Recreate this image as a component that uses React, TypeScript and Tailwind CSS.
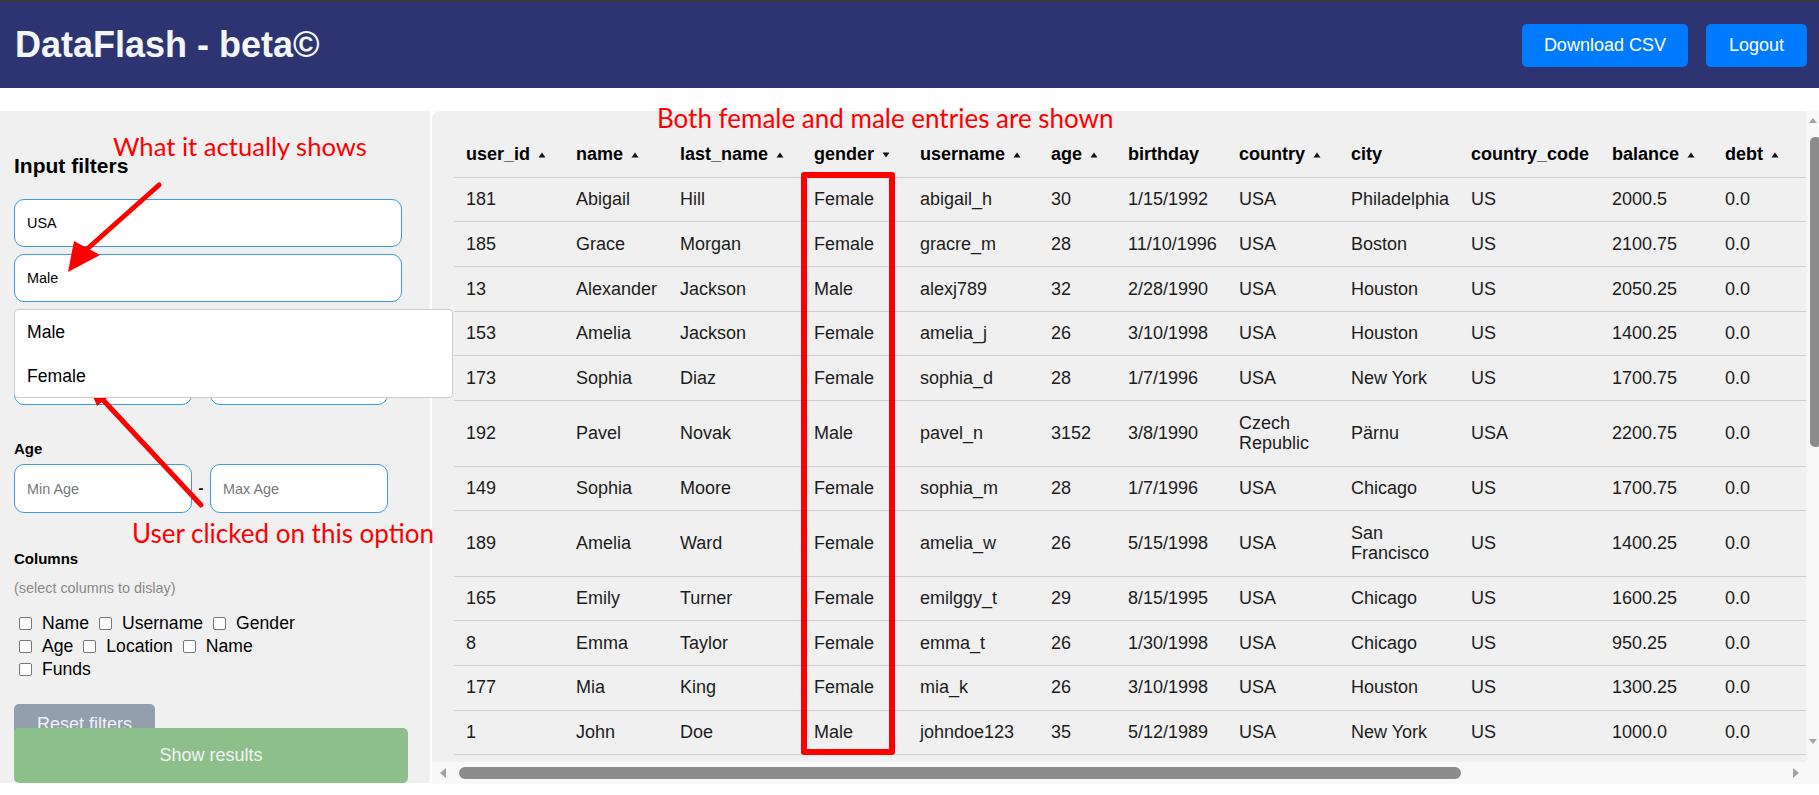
import React from "react";

type Col = { key: string; w: string; sort?: "up" | "down" };

const cols: Col[] = [
  { key: "user_id", w: "w-[110px]", sort: "up" },
  { key: "name", w: "w-[104px]", sort: "up" },
  { key: "last_name", w: "w-[134px]", sort: "up" },
  { key: "gender", w: "w-[106px]", sort: "down" },
  { key: "username", w: "w-[131px]", sort: "up" },
  { key: "age", w: "w-[77px]", sort: "up" },
  { key: "birthday", w: "w-[111px]" },
  { key: "country", w: "w-[112px]", sort: "up" },
  { key: "city", w: "w-[120px]" },
  { key: "country_code", w: "w-[141px]" },
  { key: "balance", w: "w-[113px]", sort: "up" },
  { key: "debt", w: "w-[140px]", sort: "up" },
];

const rows: string[][] = [
  ["181", "Abigail", "Hill", "Female", "abigail_h", "30", "1/15/1992", "USA", "Philadelphia", "US", "2000.5", "0.0"],
  ["185", "Grace", "Morgan", "Female", "gracre_m", "28", "11/10/1996", "USA", "Boston", "US", "2100.75", "0.0"],
  ["13", "Alexander", "Jackson", "Male", "alexj789", "32", "2/28/1990", "USA", "Houston", "US", "2050.25", "0.0"],
  ["153", "Amelia", "Jackson", "Female", "amelia_j", "26", "3/10/1998", "USA", "Houston", "US", "1400.25", "0.0"],
  ["173", "Sophia", "Diaz", "Female", "sophia_d", "28", "1/7/1996", "USA", "New York", "US", "1700.75", "0.0"],
  ["192", "Pavel", "Novak", "Male", "pavel_n", "3152", "3/8/1990", "Czech\nRepublic", "Pärnu", "USA", "2200.75", "0.0"],
  ["149", "Sophia", "Moore", "Female", "sophia_m", "28", "1/7/1996", "USA", "Chicago", "US", "1700.75", "0.0"],
  ["189", "Amelia", "Ward", "Female", "amelia_w", "26", "5/15/1998", "USA", "San\nFrancisco", "US", "1400.25", "0.0"],
  ["165", "Emily", "Turner", "Female", "emilggy_t", "29", "8/15/1995", "USA", "Chicago", "US", "1600.25", "0.0"],
  ["8", "Emma", "Taylor", "Female", "emma_t", "26", "1/30/1998", "USA", "Chicago", "US", "950.25", "0.0"],
  ["177", "Mia", "King", "Female", "mia_k", "26", "3/10/1998", "USA", "Houston", "US", "1300.25", "0.0"],
  ["1", "John", "Doe", "Male", "johndoe123", "35", "5/12/1989", "USA", "New York", "US", "1000.0", "0.0"],
];

function SortIcon({ dir }: { dir: "up" | "down" }) {
  return (
    <svg width="8" height="6" viewBox="0 0 8 6" className="inline-block ml-[8px] align-middle">
      {dir === "up" ? <path d="M4 0.5 L7.5 5.5 L0.5 5.5 Z" fill="#111" /> : <path d="M0.5 0.5 L7.5 0.5 L4 5.5 Z" fill="#111" />}
    </svg>
  );
}

const checks = ["Name", "Username", "Gender", "Age", "Location", "Name", "Funds"];

export default function App() {
  return (
    <div className="relative w-[1819px] h-[795px] overflow-hidden bg-white font-['Liberation_Sans',Arial,sans-serif] text-black">
      {/* Header */}
      <header className="h-[88px] bg-[#2e3471] border-t-2 border-[#3a3a3a] flex items-center justify-between pl-[15px] pr-[12px]">
        <h1 className="text-[36px] font-bold leading-[1.15] text-[#f3f6ff]">DataFlash - beta©</h1>
        <div className="flex gap-[18px]">
          <button className="h-[43px] px-[22px] rounded-[5px] bg-[#007bff] text-white text-[18px]">Download CSV</button>
          <button className="h-[43px] px-[23px] rounded-[5px] bg-[#007bff] text-white text-[18px]">Logout</button>
        </div>
      </header>

      <div className="mt-[23px] flex gap-[2px]">
        {/* Left filter panel */}
        <aside className="relative w-[430px] h-[672px] shrink-0 bg-[#f0f0f0] pl-[14px] pt-[43px]">
          <h2 className="text-[21px] font-bold leading-[24px]">Input filters</h2>
          <input
            readOnly
            value="USA"
            className="mt-[21px] block w-[388px] h-[48px] rounded-[10px] border border-[#3b9ddd] bg-white pl-[12px] text-[14.4px] text-black outline-none"
          />
          <input
            readOnly
            value="Male"
            className="mt-[7px] block w-[388px] h-[48px] rounded-[10px] border border-[#3b9ddd] bg-white pl-[12px] text-[14.4px] text-black outline-none"
          />
          <div className="mt-[55px] flex gap-[18px]">
            <input readOnly placeholder="Min Balance" className="w-[178px] h-[48px] rounded-[10px] border border-[#3b9ddd] bg-white pl-[12px] text-[14.4px] outline-none" />
            <input readOnly placeholder="Max Balance" className="w-[178px] h-[48px] rounded-[10px] border border-[#3b9ddd] bg-white pl-[12px] text-[14.4px] outline-none" />
          </div>
          <div className="mt-[35px] text-[15px] font-bold leading-[17px]">Age</div>
          <div className="mt-[7px] flex items-center">
            <input readOnly placeholder="Min Age" className="w-[178px] h-[49px] rounded-[10px] border border-[#3b9ddd] bg-white pl-[12px] text-[14.4px] placeholder:text-[#777] outline-none" />
            <span className="w-[18px] text-center text-[15px] font-bold">-</span>
            <input readOnly placeholder="Max Age" className="w-[178px] h-[49px] rounded-[10px] border border-[#3b9ddd] bg-white pl-[12px] text-[14.4px] placeholder:text-[#777] outline-none" />
          </div>
          <div className="mt-[37px] text-[15px] font-bold leading-[17px]">Columns</div>
          <div className="mt-[13px] text-[14.4px] leading-[16.5px] text-[#888]">(select columns to dislay)</div>
          <div className="mt-[15px] w-[300px] pl-[5px] flex flex-wrap gap-x-[10px]">
            {checks.map((c, i) => (
              <label key={i} className="flex items-center h-[23px] text-[17.6px]">
                <input type="checkbox" className="appearance-none w-[13px] h-[13px] border border-[#767676] rounded-[2px] bg-white" />
                <span className="ml-[10px]">{c}</span>
              </label>
            ))}
          </div>
          <button className="mt-[23px] block px-[23px] py-[10px] rounded-[5px] bg-[#939fad] text-[#eef1f5] text-[18px] leading-[20.7px]">
            Reset filters
          </button>
          <button className="absolute left-[14px] bottom-0 w-[394px] h-[55px] rounded-[5px] bg-[#8dbf8b] text-[#f2f2f2] text-[18px]">
            Show results
          </button>

          {/* Open dropdown */}
          <div className="absolute left-[14px] top-[198px] w-[439px] h-[89px] bg-white border border-[#cccccc] rounded-[4px] z-10 text-[17.6px]">
            <div className="h-[44px] flex items-center pl-[12px]">Male</div>
            <div className="h-[44px] flex items-center pl-[12px]">Female</div>
          </div>
        </aside>

        {/* Table panel */}
        <section className="flex-1 h-[673px] flex flex-col bg-[#f0f0f0] rounded-tl-[8px] overflow-hidden">
          <div className="flex flex-1 min-h-0">
            <div className="flex-1 overflow-hidden pt-[21px] pl-[22px]">
              <table className="table-fixed border-collapse w-[1399px] text-[18px] leading-[1.15]">
                <thead>
                  <tr className="border-b border-[#cfcfcf]">
                    {cols.map((c) => (
                      <th key={c.key} className={`${c.w} text-left font-bold whitespace-nowrap px-[12px] py-[12px]`}>
                        {c.key}
                        {c.sort && <SortIcon dir={c.sort} />}
                      </th>
                    ))}
                  </tr>
                </thead>
                <tbody>
                  {rows.map((r, i) => (
                    <tr key={i} className="border-b border-[#cfcfcf]">
                      {r.map((v, j) => (
                        <td key={j} className="px-[12px] py-[11.5px] whitespace-pre text-[#1c1c1c] align-middle">
                          {v}
                        </td>
                      ))}
                    </tr>
                  ))}
                </tbody>
              </table>
            </div>
            {/* vertical scrollbar */}
            <div className="w-[13px] shrink-0 bg-[#f8f8f8] flex flex-col items-end">
              <svg width="13" height="8" viewBox="0 0 13 8" className="mt-[5px]">
                <path d="M3 7 L7 2 L11 7 Z" fill="#a3a3a3" />
              </svg>
              <div className="mt-[13px] w-[9px] h-[310px] bg-[#8c8c8c] rounded-l-[5px] rounded-r-[2px]" />
              <div className="flex-1" />
              <svg width="13" height="8" viewBox="0 0 13 8" className="mb-[16px]">
                <path d="M3 1 L11 1 L7 6 Z" fill="#a3a3a3" />
              </svg>
            </div>
          </div>
          <div className="h-[22px] shrink-0 flex">
            <div className="flex-1 bg-[#f8f8f8] flex items-center">
              <svg width="10" height="12" viewBox="0 0 10 12" className="ml-[6px]">
                <path d="M8 1 L8 11 L2 6 Z" fill="#a3a3a3" />
              </svg>
              <div className="ml-[11px] w-[1002px] h-[12px] rounded-full bg-[#8c8c8c]" />
              <div className="flex-1" />
              <svg width="10" height="12" viewBox="0 0 10 12" className="mr-[5px]">
                <path d="M2 1 L2 11 L8 6 Z" fill="#a3a3a3" />
              </svg>
            </div>
            <div className="w-[13px] bg-[#f8f8f8]" />
          </div>
        </section>
      </div>

      {/* Annotation overlays */}
      <div className="absolute left-[801px] top-[172px] w-[94px] h-[583px] border-[6px] border-[#ff0000] rounded-[3px] pointer-events-none" />
      <div className="absolute left-[113px] top-[134px] text-[25.6px] leading-none text-[#ff0000] font-['Lato',sans-serif] whitespace-nowrap">
        What it actually shows
      </div>
      <div className="absolute left-[657px] top-[105px] text-[26px] leading-none text-[#ff0000] font-['Lato',sans-serif] whitespace-nowrap">
        Both female and male entries are shown
      </div>
      <div className="absolute left-[132px] top-[520px] text-[26px] leading-none text-[#ff0000] font-['Lato',sans-serif] whitespace-nowrap">
        User clicked on this option
      </div>
      <svg className="absolute left-0 top-0 pointer-events-none" width="1819" height="795" viewBox="0 0 1819 795">
        <line x1="159" y1="185" x2="86" y2="250" stroke="#ff0000" strokeWidth="5" strokeLinecap="round" />
        <path d="M68 272 L74 241 L100 255 Z" fill="#ff0000" />
        <line x1="201" y1="505" x2="104" y2="401" stroke="#ff0000" strokeWidth="5" strokeLinecap="round" />
        <path d="M87 382 L111 395 L97 406 Z" fill="#ff0000" />
      </svg>
    </div>
  );
}
